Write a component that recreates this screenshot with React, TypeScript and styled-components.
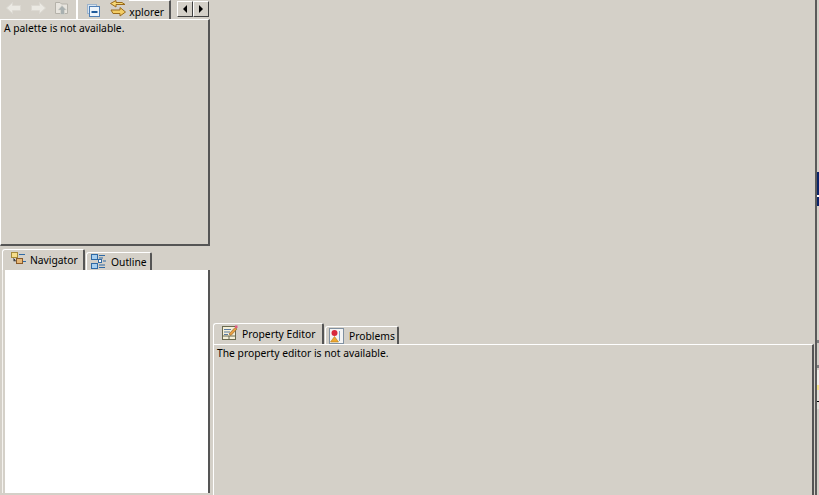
import React from "react";
import styled, { createGlobalStyle } from "styled-components";

const Global = createGlobalStyle`
  html, body { margin: 0; padding: 0; background: #d4d0c8; overflow: hidden; }
  #root { width: 819px; height: 495px; }
`;

const Page = styled.div`
  width: 819px; height: 495px; display: flex; background: #d4d0c8; overflow: hidden; position: relative;
  font-family: "Noto Sans", "DejaVu Sans", sans-serif; font-size: 10.3px; color: #000;
`;
const LeftColumn = styled.div`
  width: 210px; flex: none; display: flex; flex-direction: column;
`;
const Toolbar = styled.div`
  height: 19px; flex: none; display: flex; align-items: flex-start;
`;
const ToolIcon = styled.span<{ $w?: number; $mr?: number; $mt?: number }>`
  width: ${p => p.$w ?? 16}px; height: 16px; flex: none; display: flex;
  margin-right: ${p => p.$mr ?? 8}px; margin-top: ${p => p.$mt ?? 0}px;
`;
const NavGroup = styled.div`
  display: flex; padding-left: 6px; width: 76px; box-sizing: border-box; flex: none; height: 19px;
`;
const Sep = styled.div`
  width: 2px; height: 19px; flex: none; background: #fff; margin-right: 9px;
`;
const ClippedTab = styled.div`
  width: 42px; height: 19px; flex: none; margin-left: 2px; display: flex; justify-content: flex-end; align-items: center;
  overflow: hidden; border-top: 1px solid #fff; border-right: 2px solid #555; box-sizing: border-box; padding: 3px 5px 0 0;
  span { flex: none; }
`;
const ArrowGroup = styled.div`
  display: flex; margin-left: 6px; padding-top: 1px;
`;
const ArrowBtn = styled.div`
  width: 16px; height: 16px; box-sizing: border-box; display: flex; align-items: center; justify-content: center;
  border-top: 1px solid #fff; border-left: 1px solid #fff; border-right: 1px solid #404040; border-bottom: 1px solid #404040;
`;
const PalettePanel = styled.div`
  height: 227px; flex: none; box-sizing: border-box; padding: 2px 0 0 3px; line-height: 13px;
  border-top: 1px solid #fff; border-left: 1px solid #fff;
  border-right: 2px solid #555; border-bottom: 2px solid #555;
`;
const TabRow = styled.div<{ $ml: number; $h: number }>`
  display: flex; align-items: flex-end; height: ${p => p.$h}px; flex: none; padding-left: ${p => p.$ml}px;
`;
const Tab = styled.div<{ $w: number; $pl: number; $active?: boolean }>`
  width: ${p => p.$w}px; height: ${p => (p.$active ? 21 : 18)}px; flex: none; box-sizing: border-box;
  display: flex; align-items: center; gap: 4px; padding-left: ${p => p.$pl}px;
  margin-right: ${p => (p.$active ? 1 : 0)}px; white-space: nowrap;
  border-top: 1px solid #fff; border-left: 1px solid #fff; border-right: 2px solid #555;
  border-top-left-radius: 3px; border-top-right-radius: 2px;
  svg { margin-top: ${p => (p.$active ? -3 : 0)}px; }
`;
const WhiteFrame = styled.div`
  flex: 1; margin: 0 0 2px 2px; padding-left: 2px; display: flex; border-left: 1px solid #f4f2ee;
`;
const WhitePanel = styled.div`
  flex: 1; background: #fff; border-right: 2px solid #555;
`;
const RightColumn = styled.div`
  flex: 1; display: flex; flex-direction: column; justify-content: flex-end; padding-left: 3px; min-width: 0;
`;
const EditorPanel = styled.div`
  height: 151px; width: 601px; flex: none; box-sizing: border-box; padding: 2px 0 0 3px; line-height: 13px;
  border-top: 1px solid #fff; border-left: 1px solid #fff; border-right: 2px solid #555;
`;
const EdgeStrip = styled.div`
  position: absolute; left: 815px; top: 0; width: 4px; height: 495px; border-left: 2px solid #5a5a5a; box-sizing: border-box; background: #d4d0c8;
`;
const Mark = styled.div<{ $top: number; $h: number; $c: string }>`
  position: absolute; left: 0; top: ${p => p.$top}px; height: ${p => p.$h}px; width: 2px; background: ${p => p.$c};
`;

const Back = ({ flip }: { flip?: boolean }) => (
  <svg width="16" height="16" viewBox="0 0 16 16" style={flip ? { transform: "scaleX(-1)" } : undefined}>
    <path d="M0.5 8 L6.5 2.5 V5.5 H14.5 V10.5 H6.5 V13.5 Z" fill="#ebe9e3" stroke="#dcd9d2" strokeWidth="1" />
  </svg>
);
const UpFolder = () => (
  <svg width="16" height="16" viewBox="0 0 16 16">
    <path d="M1.5 2.5 H6 L7.5 4 H13.5 V13.5 H1.5 Z" fill="#e8e5df" stroke="#b5b2aa" />
    <path d="M8 5.5 L12.5 10 H10.5 V14.5 H6.5 V10 H4 Z" fill="#a9b0b0" stroke="#d8d6cf" strokeWidth="0.6" />
  </svg>
);
const Collapse = () => (
  <svg width="15" height="16" viewBox="0 0 15 16">
    <rect x="0.5" y="0.5" width="9" height="9" fill="#d8e4f0" stroke="#9db4cc" />
    <rect x="2.5" y="2.5" width="10" height="10" fill="#eef4fa" stroke="#4f7fb5" />
    <rect x="4.5" y="7" width="6" height="2" fill="#1f5a9a" />
  </svg>
);
const Sync = () => (
  <svg width="18" height="18" viewBox="0 0 18 18">
    <path d="M16 4.5 H7 V7 L1.5 3.5 L7 0.5 V2.5 H13 Z" fill="#f6d873" stroke="#9a6b1c" />
    <path d="M2 10 H11 V7.5 L16.5 12 L11 16 V13.5 H4 Z" fill="#f3cd65" stroke="#9a6b1c" />
  </svg>
);
const Navigator = () => (
  <svg width="16" height="16" viewBox="0 0 16 16">
    <rect x="1.5" y="1.5" width="6" height="5" fill="#f5dd8a" stroke="#a58a3a" />
    <rect x="6.5" y="7.5" width="6" height="5" fill="#e6b878" stroke="#8a5a28" />
    <path d="M9 3.5 H15" stroke="#2f6aa5" />
    <path d="M13 10.5 H16" stroke="#2f6aa5" />
    <path d="M3.5 7 V10 H6" stroke="#808080" />
  </svg>
);
const Outline = () => (
  <svg width="16" height="16" viewBox="0 0 16 16">
    <rect x="0.5" y="0.5" width="6" height="5" fill="#a8d0f0" stroke="#2f6aa5" />
    <rect x="0.5" y="9.5" width="6" height="5" fill="#a8d0f0" stroke="#2f6aa5" />
    <rect x="7.5" y="5.5" width="3" height="3" fill="#fff" stroke="#2f6aa5" />
    <path d="M8 1.5 H14 M8 4 H12 M12 7 H15 M8 11 H14 M8 13.5 H14" stroke="#2f6aa5" />
  </svg>
);
const PropertyIcon = () => (
  <svg width="16" height="16" viewBox="0 0 16 16">
    <rect x="0.5" y="1.5" width="13" height="13" fill="#f5f0d8" stroke="#6a6a50" />
    <path d="M2 4.5 H9 M2 7 H8 M2 9.5 H6" stroke="#5a7aa0" />
    <path d="M0.5 11 H13.5 M7 11 V14.5" stroke="#6a6a50" />
    <path d="M7 9 L13 2.5 L15 4 L9 10.5 Z" fill="#e8a040" stroke="#8a5a28" strokeWidth="0.6" />
    <rect x="13" y="0.5" width="2.5" height="2.5" fill="#e05a80" />
  </svg>
);
const ProblemsIcon = () => (
  <svg width="16" height="16" viewBox="0 0 16 16">
    <rect x="0.5" y="0.5" width="14" height="15" fill="#f4f4f4" stroke="#8090a0" />
    <circle cx="5.5" cy="5" r="3" fill="#d8283c" />
    <path d="M5.5 8.5 L9.5 14 H1.5 Z" fill="#f0a830" stroke="#b07818" strokeWidth="0.6" />
    <path d="M10.5 3 V13" stroke="#7aa0c8" />
  </svg>
);
const Arrow = ({ right }: { right?: boolean }) => (
  <svg width="6" height="8" viewBox="0 0 6 8">
    <path d={right ? "M1 0 L5 4 L1 8 Z" : "M5 0 L1 4 L5 8 Z"} fill="#000" />
  </svg>
);

export default function App() {
  return (
    <Page>
      <Global />
      <LeftColumn>
        <Toolbar>
          <NavGroup>
            <ToolIcon><Back /></ToolIcon>
            <ToolIcon><Back flip /></ToolIcon>
            <ToolIcon><UpFolder /></ToolIcon>
          </NavGroup>
          <Sep />
          <ToolIcon $w={15} $mr={7} $mt={4}><Collapse /></ToolIcon>
          <ToolIcon $w={18} $mr={0}><Sync /></ToolIcon>
          <ClippedTab><span>Explorer</span></ClippedTab>
          <ArrowGroup>
            <ArrowBtn><Arrow /></ArrowBtn>
            <ArrowBtn><Arrow right /></ArrowBtn>
          </ArrowGroup>
        </Toolbar>
        <PalettePanel>A palette is not available.</PalettePanel>
        <TabRow $ml={2} $h={24}>
          <Tab $w={83} $pl={7} $active><Navigator />Navigator</Tab>
          <Tab $w={66} $pl={4}><Outline />Outline</Tab>
        </TabRow>
        <WhiteFrame><WhitePanel /></WhiteFrame>
      </LeftColumn>
      <RightColumn>
        <TabRow $ml={0} $h={22}>
          <Tab $w={111} $pl={8} $active><PropertyIcon />Property Editor</Tab>
          <Tab $w={74} $pl={3}><ProblemsIcon />Problems</Tab>
        </TabRow>
        <EditorPanel>The property editor is not available.</EditorPanel>
      </RightColumn>
      <EdgeStrip>
        <Mark $top={172} $h={23} $c="#0a246a" />
        <Mark $top={195} $h={2} $c="#ffffff" />
        <Mark $top={197} $h={9} $c="#0a246a" />
        <Mark $top={340} $h={3} $c="#808080" />
        <Mark $top={365} $h={3} $c="#808080" />
        <Mark $top={370} $h={15} $c="#f0eee8" />
        <Mark $top={385} $h={5} $c="#f6e38a" />
        <Mark $top={390} $h={19} $c="#e4e1da" />
        <Mark $top={401} $h={1} $c="#000000" />
      </EdgeStrip>
    </Page>
  );
}
